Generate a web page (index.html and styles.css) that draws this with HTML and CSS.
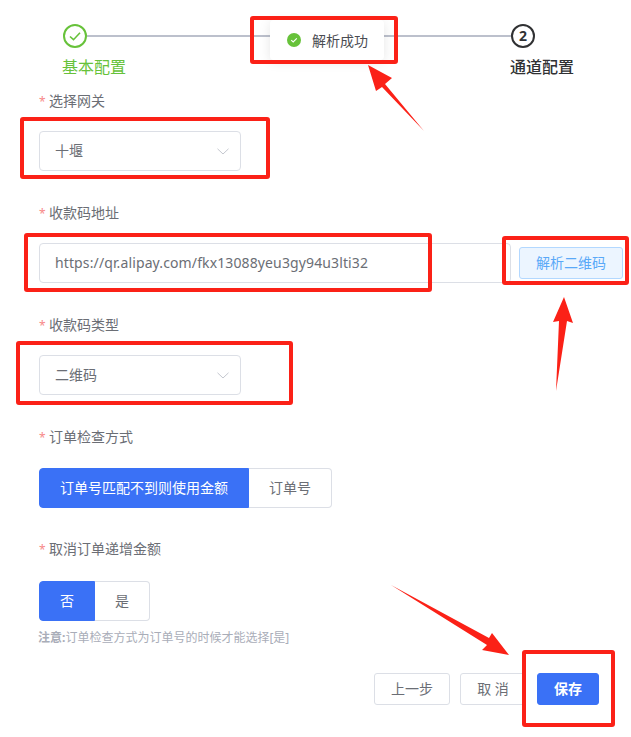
FILE: index.html
```html
<!DOCTYPE html>
<html lang="zh-CN">
<head>
<meta charset="utf-8">
<title>通道配置</title>
<link rel="stylesheet" href="styles.css">
</head>
<body>
<div class="page">
  <div class="steps">
    <div class="steps-head">
      <svg class="step-icon" viewBox="0 0 24 24" width="24" height="24"><circle cx="12" cy="12" r="11" fill="none" stroke="#67c23a" stroke-width="2"/><path d="M7 12.5l3.5 3.2L17 8.800" fill="none" stroke="#67c23a" stroke-width="1.600"/></svg>
      <div class="step-line"></div>
      <div class="step-num">2</div>
    </div>
    <div class="steps-labels">
      <span class="step-done">基本配置</span>
      <span class="step-todo">通道配置</span>
    </div>
  </div>

  <form class="form">
    <div class="item">
      <div class="label"><span class="star">*</span>选择网关</div>
      <div class="select"><span>十堰</span><svg class="chev" viewBox="0 0 12 7" width="12" height="7"><path d="M.5.8L6 6l5.500-5.200" fill="none" stroke="#c4c7cf" stroke-width="1"/></svg></div>
    </div>
    <div class="item">
      <div class="label"><span class="star">*</span>收款码地址</div>
      <div class="input-row">
        <div class="input">https://qr.alipay.com/fkx13088yeu3gy94u3lti32</div>
        <div class="btn-parse">解析二维码</div>
      </div>
    </div>
    <div class="item">
      <div class="label"><span class="star">*</span>收款码类型</div>
      <div class="select"><span>二维码</span><svg class="chev" viewBox="0 0 12 7" width="12" height="7"><path d="M.5.8L6 6l5.500-5.200" fill="none" stroke="#c4c7cf" stroke-width="1"/></svg></div>
    </div>
    <div class="item item-radio">
      <div class="label"><span class="star">*</span>订单检查方式</div>
      <div class="group"><span class="seg seg-on seg-wide">订单号匹配不到则使用金额</span><span class="seg seg-off seg-mid">订单号</span></div>
    </div>
    <div class="item item-last">
      <div class="label"><span class="star">*</span>取消订单递增金额</div>
      <div class="group"><span class="seg seg-on seg-a">否</span><span class="seg seg-off seg-b">是</span></div>
      <div class="note"><b>注意:</b>订单检查方式为订单号的时候才能选择[是]</div>
    </div>
    <div class="footer">
      <span class="btn btn-prev">上一步</span>
      <span class="btn btn-cancel">取 消</span>
      <span class="btn btn-save">保存</span>
    </div>
  </form>

  <div class="toast">
    <svg viewBox="0 0 14 14" width="14" height="14"><circle cx="7" cy="7" r="7" fill="#67c23a"/><path d="M4.200 7.200l2 1.800 3.600-3.600" fill="none" stroke="#fff" stroke-width="1.100"/></svg>
    <span>解析成功</span>
  </div>

  <svg class="marks" viewBox="0 0 631 737" width="631" height="737">
    <g class="box">
      <rect x="252" y="18" width="144" height="44" rx="1"/>
      <rect x="22" y="119" width="246" height="58" rx="1"/>
      <rect x="26" y="235" width="404" height="55" rx="1"/>
      <rect x="504" y="238" width="123" height="45" rx="1"/>
      <rect x="18" y="343" width="273" height="60" rx="1"/>
      <rect x="524" y="652" width="89" height="73" rx="1"/>
    </g>
    <g class="arrow">
      <polygon points="368,65 392,78 385,84 424,131 382,87 376,91"/>
      <polygon points="564,297 573,323 567,321 556,391 559,321 553,322"/>
      <polygon points="391,585 489,638 492,633 509,655 482,650 487,645"/>
    </g>
  </svg>
</div>
</body>
</html>
```
FILE: styles.css
```css
* { box-sizing: border-box; }
html, body { margin: 0; padding: 0; background: #fff; }
body {
  font-family: "Noto Sans", "Noto Sans CJK SC", sans-serif;
  font-size: 14px;
  color: #6b6e75;
}
.page { position: relative; width: 631px; height: 737px; overflow: hidden; padding: 24px 0 0 39px; }

.steps { padding-left: 24px; }
.steps-head { display: flex; align-items: center; width: 472px; height: 24px; }
.step-icon { flex: none; display: block; }
.step-line { flex: 1; height: 2px; background: #bcc0cc; }
.step-num {
  flex: none; width: 24px; height: 24px; border: 2px solid #303133; border-radius: 50%;
  color: #303133; font-size: 14px; font-weight: 700; line-height: 20px; text-align: center;
}
.steps-labels {
  display: flex; justify-content: space-between; width: 512px;
  margin-top: 7px; margin-left: -1px; font-size: 16px; line-height: 24px;
}
.step-done { color: #67c23a; }
.step-todo { color: #303133; font-weight: 500; }

.form { margin-top: 2px; }
.item { margin-bottom: 22px; }
.item-radio { margin-bottom: 21px; }
.item-last { margin-bottom: 0; }
.label { height: 40px; line-height: 40px; margin-bottom: 10px; }
.item-radio .label { margin-bottom: 11px; }
.item-last .label { margin-bottom: 12px; }
.star { color: #f78989; font-size: 12px; margin-right: 3.400px; }

.select {
  display: flex; align-items: center; justify-content: space-between;
  width: 202px; height: 40px; padding: 0 10px 2px 15px;
  border: 1px solid #dcdfe6; border-radius: 4px; background: #fff;
}
.chev { display: block; margin-top: 2px; margin-right: 1px; }

.input-row { display: flex; align-items: center; gap: 8px; }
.input {
  width: 472px; height: 40px; line-height: 37px; padding: 0 15px;
  border: 1px solid #dcdfe6; border-radius: 4px; white-space: nowrap; letter-spacing: .12px;
}
.btn-parse {
  width: 104px; height: 32px; line-height: 30px; text-align: center;
  color: #5aa9f8; background: #ecf5ff; border: 1px solid #b3d8ff; border-radius: 3px;
}

.group { display: flex; height: 40px; }
.seg { display: block; height: 40px; line-height: 38px; text-align: center; border: 1px solid #dcdfe6; }
.seg-on { background: #3a71f6; border-color: #3a71f6; color: #fff; border-radius: 4px 0 0 4px; }
.seg-off { border-left: 0; border-radius: 0 4px 4px 0; }
.seg-wide { width: 210px; }
.seg-mid { width: 83px; }
.seg-a { width: 56px; }
.seg-b { width: 55px; }

.note { margin-top: 9px; margin-left: -1px; font-size: 12px; line-height: 16px; color: #a9adb8; }
.note b { font-weight: 700; }

.footer { display: flex; margin-top: 27px; margin-left: 335px; gap: 10px; }
.btn {
  display: block; height: 32px; line-height: 30px; text-align: center;
  border: 1px solid #dcdfe6; border-radius: 3px;
}
.btn-prev { width: 76px; }
.btn-cancel { width: 66px; }
.btn-save { width: 62px; margin-left: 1px; background: #3a71f6; border-color: #3a71f6; color: #fff; font-weight: 700; }

.toast {
  position: absolute; left: 270px; top: 20px; width: 114px; height: 40px;
  display: flex; align-items: center; gap: 11px; padding-left: 17px;
  background: #fff; border-radius: 4px; box-shadow: 0 2px 12px rgba(0,0,0,.1);
  font-size: 14px; color: #4a4c52;
}
.toast svg { flex: none; display: block; }

.marks { position: absolute; left: 0; top: 0; pointer-events: none; }
.box rect { fill: none; stroke: #fb2117; stroke-width: 4; }
.arrow polygon { fill: #fb2117; }
```
